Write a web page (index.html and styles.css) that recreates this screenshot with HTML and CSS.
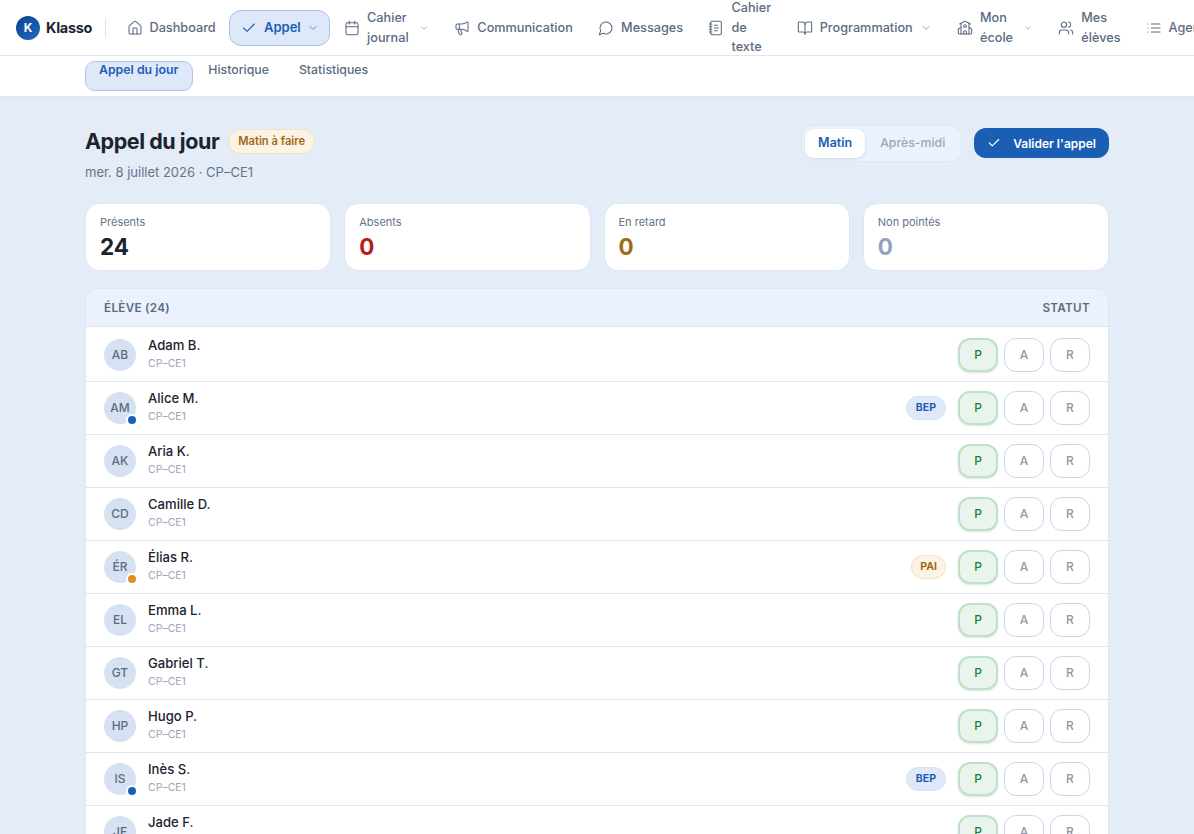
FILE: index.html
```html
<!DOCTYPE html>
<html lang="fr">
<head>
  <meta charset="UTF-8">
  <meta name="viewport" content="width=device-width, initial-scale=1">
  <title>Appel du jour</title>
  <link rel="stylesheet" href="styles.css">
</head>

<body>

<header class="topbar">
  <div class="brand">
    <span class="brand-mark">K</span>
    <span class="brand-name">Klasso</span>
  </div>
  <span class="topbar-sep"></span>
  <nav class="main-nav">
    <a class="nav-item">
      <svg class="nav-icon" viewBox="0 0 24 24"><path d="M15 21v-8a1 1 0 0 0-1-1h-4a1 1 0 0 0-1 1v8"/><path d="M3 10a2 2 0 0 1 .709-1.528l7-5.999a2 2 0 0 1 2.582 0l7 5.999A2 2 0 0 1 21 10v9a2 2 0 0 1-2 2H5a2 2 0 0 1-2-2z"/></svg>
      <span>Dashboard</span>
    </a>
    <a class="nav-item active">
      <svg class="nav-icon" viewBox="0 0 24 24"><path d="M20 6 9 17l-5-5"/></svg>
      <span>Appel</span>
      <svg class="nav-caret" viewBox="0 0 24 24"><path d="m6 9 6 6 6-6"/></svg>
    </a>
    <a class="nav-item">
      <svg class="nav-icon" viewBox="0 0 24 24"><path d="M8 2v4"/><path d="M16 2v4"/><rect x="3" y="4" width="18" height="18" rx="2"/><path d="M3 10h18"/></svg>
      <span class="nav-wrap w-journal">Cahier<br>journal</span>
      <svg class="nav-caret small" viewBox="0 0 24 24"><path d="m6 9 6 6 6-6"/></svg>
    </a>
    <a class="nav-item">
      <svg class="nav-icon" viewBox="0 0 24 24"><path d="M11 6a13 13 0 0 0 8.4-2.8A1 1 0 0 1 21 4v12a1 1 0 0 1-1.6.8A13 13 0 0 0 11 14H5a2 2 0 0 1-2-2V8a2 2 0 0 1 2-2z"/><path d="M6 14a12 12 0 0 0 2.4 7.2 2 2 0 0 0 3.2-2.4A8 8 0 0 1 10 14"/><path d="M8 6v8"/></svg>
      <span>Communication</span>
    </a>
    <a class="nav-item">
      <svg class="nav-icon" viewBox="0 0 24 24"><path d="M7.9 20A9 9 0 1 0 4 16.1L2 22Z"/></svg>
      <span>Messages</span>
    </a>
    <a class="nav-item">
      <svg class="nav-icon" viewBox="0 0 24 24"><path d="M2 6h4"/><path d="M2 10h4"/><path d="M2 14h4"/><path d="M2 18h4"/><rect x="4" y="2" width="16" height="20" rx="2"/><path d="M9.5 8h5"/><path d="M9.5 12H16"/><path d="M9.5 16H14"/></svg>
      <span class="nav-wrap w-texte">Cahier<br>de<br>texte</span>
    </a>
    <a class="nav-item">
      <svg class="nav-icon" viewBox="0 0 24 24"><path d="M12 7v14"/><path d="M3 18a1 1 0 0 1-1-1V4a1 1 0 0 1 1-1h5a4 4 0 0 1 4 4 4 4 0 0 1 4-4h5a1 1 0 0 1 1 1v13a1 1 0 0 1-1 1h-6a3 3 0 0 0-3 3 3 3 0 0 0-3-3z"/></svg>
      <span>Programmation</span>
      <svg class="nav-caret" viewBox="0 0 24 24"><path d="m6 9 6 6 6-6"/></svg>
    </a>
    <a class="nav-item">
      <svg class="nav-icon" viewBox="0 0 24 24"><path d="M14 21v-3a2 2 0 0 0-4 0v3"/><path d="M18 4.933V21"/><path d="m4 6 7.106-3.79a2 2 0 0 1 1.788 0L20 6"/><path d="m6 11-3.52 2.147a1 1 0 0 0-.48.854V19a2 2 0 0 0 2 2h16a2 2 0 0 0 2-2v-5a1 1 0 0 0-.48-.853L18 11"/><path d="M6 4.933V21"/><circle cx="12" cy="9" r="2"/></svg>
      <span class="nav-wrap w-ecole">Mon<br>école</span>
      <svg class="nav-caret small" viewBox="0 0 24 24"><path d="m6 9 6 6 6-6"/></svg>
    </a>
    <a class="nav-item">
      <svg class="nav-icon" viewBox="0 0 24 24"><path d="M16 21v-2a4 4 0 0 0-4-4H6a4 4 0 0 0-4 4v2"/><circle cx="9" cy="7" r="4"/><path d="M22 21v-2a4 4 0 0 0-3-3.87"/><path d="M16 3.13a4 4 0 0 1 0 7.75"/></svg>
      <span class="nav-wrap w-eleves">Mes<br>élèves</span>
    </a>
    <a class="nav-item">
      <svg class="nav-icon" viewBox="0 0 24 24"><path d="M3 12h.01"/><path d="M3 18h.01"/><path d="M3 6h.01"/><path d="M8 12h13"/><path d="M8 18h13"/><path d="M8 6h13"/></svg>
      <span>Agenda</span>
    </a>
  </nav>
</header>

<div class="subnav">
  <a class="sub-tab active">Appel du jour</a>
  <a class="sub-tab">Historique</a>
  <a class="sub-tab">Statistiques</a>
</div>

<main class="page">
  <div class="page-head">
    <div>
      <div class="title-row">
        <h1>Appel du jour</h1>
        <span class="state-badge">Matin à faire</span>
      </div>
      <p class="page-date">mer. 8 juillet 2026 · CP–CE1</p>
    </div>
    <div class="page-actions">
      <div class="segment">
        <span class="segment-opt active">Matin</span>
        <span class="segment-opt">Après-midi</span>
      </div>
      <button class="validate-btn">
        <svg viewBox="0 0 24 24"><path d="M20 6 9 17l-5-5"/></svg>
        Valider l'appel
      </button>
    </div>
  </div>

  <div class="stats">
    <div class="stat-card">
      <div class="stat-label">Présents</div>
      <div class="stat-value">24</div>
    </div>
    <div class="stat-card">
      <div class="stat-label">Absents</div>
      <div class="stat-value red">0</div>
    </div>
    <div class="stat-card">
      <div class="stat-label">En retard</div>
      <div class="stat-value amber">0</div>
    </div>
    <div class="stat-card">
      <div class="stat-label">Non pointés</div>
      <div class="stat-value grey">0</div>
    </div>
  </div>

  <section class="roster">
    <div class="roster-head">
      <span>Élève (24)</span>
      <span>Statut</span>
    </div>
    <div class="roster-list">
      <div class="student">
        <div class="avatar">AB</div>
        <div class="student-info"><div class="student-name">Adam B.</div><div class="student-class">CP–CE1</div></div>
        <div class="status"><span class="status-btn on">P</span><span class="status-btn">A</span><span class="status-btn">R</span></div>
      </div>
      <div class="student">
        <div class="avatar">AM<i class="dot blue"></i></div>
        <div class="student-info"><div class="student-name">Alice M.</div><div class="student-class">CP–CE1</div></div>
        <span class="tag bep">BEP</span>
        <div class="status"><span class="status-btn on">P</span><span class="status-btn">A</span><span class="status-btn">R</span></div>
      </div>
      <div class="student">
        <div class="avatar">AK</div>
        <div class="student-info"><div class="student-name">Aria K.</div><div class="student-class">CP–CE1</div></div>
        <div class="status"><span class="status-btn on">P</span><span class="status-btn">A</span><span class="status-btn">R</span></div>
      </div>
      <div class="student">
        <div class="avatar">CD</div>
        <div class="student-info"><div class="student-name">Camille D.</div><div class="student-class">CP–CE1</div></div>
        <div class="status"><span class="status-btn on">P</span><span class="status-btn">A</span><span class="status-btn">R</span></div>
      </div>
      <div class="student">
        <div class="avatar">ÉR<i class="dot orange"></i></div>
        <div class="student-info"><div class="student-name">Élias R.</div><div class="student-class">CP–CE1</div></div>
        <span class="tag pai">PAI</span>
        <div class="status"><span class="status-btn on">P</span><span class="status-btn">A</span><span class="status-btn">R</span></div>
      </div>
      <div class="student">
        <div class="avatar">EL</div>
        <div class="student-info"><div class="student-name">Emma L.</div><div class="student-class">CP–CE1</div></div>
        <div class="status"><span class="status-btn on">P</span><span class="status-btn">A</span><span class="status-btn">R</span></div>
      </div>
      <div class="student">
        <div class="avatar">GT</div>
        <div class="student-info"><div class="student-name">Gabriel T.</div><div class="student-class">CP–CE1</div></div>
        <div class="status"><span class="status-btn on">P</span><span class="status-btn">A</span><span class="status-btn">R</span></div>
      </div>
      <div class="student">
        <div class="avatar">HP</div>
        <div class="student-info"><div class="student-name">Hugo P.</div><div class="student-class">CP–CE1</div></div>
        <div class="status"><span class="status-btn on">P</span><span class="status-btn">A</span><span class="status-btn">R</span></div>
      </div>
      <div class="student">
        <div class="avatar">IS<i class="dot blue"></i></div>
        <div class="student-info"><div class="student-name">Inès S.</div><div class="student-class">CP–CE1</div></div>
        <span class="tag bep">BEP</span>
        <div class="status"><span class="status-btn on">P</span><span class="status-btn">A</span><span class="status-btn">R</span></div>
      </div>
      <div class="student">
        <div class="avatar">JF</div>
        <div class="student-info"><div class="student-name">Jade F.</div><div class="student-class">CP–CE1</div></div>
        <div class="status"><span class="status-btn on">P</span><span class="status-btn">A</span><span class="status-btn">R</span></div>
      </div>
    </div>
  </section>
</main>

</body>
</html>
```

FILE: styles.css
```css
* {
  box-sizing: border-box;
}
html, body {
  height: 100%;
  overflow: hidden;
}
body {
  margin: 0;
  font-family: Inter, "Liberation Sans", sans-serif;
  font-size: 13px;
  line-height: 1.5;
  color: #1c2330;
  background: #e4ecf7;
}

/* top bar */
.topbar {
  display: flex;
  align-items: center;
  height: 56px;
  padding-left: 16px;
  background: white;
  border-bottom: 1px solid #dfe6f0;
  overflow: hidden;
}
.brand {
  display: flex;
  align-items: center;
  gap: 6px;
  flex-shrink: 0;
}
.brand-mark {
  display: flex;
  align-items: center;
  justify-content: center;
  width: 24px;
  height: 24px;
  border-radius: 50%;
  background: linear-gradient(135deg, #0f3f86, #1f6cc6);
  color: white;
  font-size: 12px;
  font-weight: 700;
}
.brand-name {
  width: 47px;
  font-size: 14.5px;
  font-weight: 700;
  letter-spacing: -0.3px;
}
.topbar-sep {
  flex-shrink: 0;
  width: 1px;
  height: 20px;
  margin: 0 9px 0 12px;
  background: #dfe6f0;
}
.main-nav {
  display: flex;
  align-items: center;
  gap: 2.3px;
}
.nav-item {
  display: flex;
  align-items: center;
  flex-shrink: 0;
  gap: 7px;
  height: 36px;
  padding: 0 10.5px;
  border: 1.5px solid transparent;
  border-radius: 12px;
  color: #5b6b82;
  font-size: 12.7px;
  font-weight: 450;
  line-height: 19.5px;
  white-space: nowrap;
}
.nav-item.active {
  background: #dfe8f9;
  border-color: #a7c4ec;
  color: #1a5fb4;
  font-size: 13px;
  font-weight: 600;
}
.nav-icon {
  flex-shrink: 0;
  width: 16px;
  height: 16px;
  fill: none;
  stroke: currentColor;
  stroke-width: 1.6;
  stroke-linecap: round;
  stroke-linejoin: round;
}
.nav-caret {
  flex-shrink: 0;
  width: 12px;
  height: 12px;
  fill: none;
  stroke: #95a3b8;
  stroke-width: 2;
  stroke-linecap: round;
  stroke-linejoin: round;
}
.active .nav-caret {
  stroke: #5f8fd0;
  margin-left: -1px;
}
.nav-caret.small {
  width: 10px;
  height: 10px;
}
.w-journal { width: 45px; }
.w-texte { width: 40px; }
.w-ecole { width: 36px; }
.w-eleves { width: 39px; }

/* sub nav */
.subnav {
  display: flex;
  align-items: flex-start;
  gap: 2px;
  height: 41px;
  padding: 5px 0 0 85px;
  background: white;
  border-bottom: 1px solid #dfe6f0;
}
.sub-tab {
  height: 30px;
  padding: 0 13px;
  border: 1.5px solid transparent;
  border-radius: 10px;
  color: #5b6b82;
  font-size: 12.3px;
  font-weight: 450;
  line-height: 15px;
}
.sub-tab.active {
  margin-right: -1px;
  padding-right: 14px;
  background: #dfe8f9;
  border-color: #a7c4ec;
  color: #1a5fb4;
  font-weight: 600;
}

/* page */
.page {
  width: 1024px;
  margin: 0 auto;
  padding-top: 28px;
}
.page-head {
  display: flex;
  align-items: flex-start;
  justify-content: space-between;
  margin-bottom: 20.5px;
}
.title-row {
  display: flex;
  align-items: center;
  gap: 9px;
}
h1 {
  margin: 0;
  font-size: 21.5px;
  font-weight: 700;
  line-height: 33px;
  letter-spacing: -0.45px;
}
.state-badge {
  padding: 0 9px;
  height: 25px;
  line-height: 23px;
  border: 1px solid #f5e0bd;
  border-radius: 13px;
  background: #fdf3e5;
  color: #a06a14;
  font-size: 11.2px;
  font-weight: 600;
}
.page-date {
  margin: 5px 0 0;
  color: #64748b;
}
.page-actions {
  display: flex;
  align-items: flex-start;
  gap: 12px;
  height: 37px;
}
.segment {
  display: flex;
  gap: 2px;
  height: 37px;
  padding: 3px;
  background: #ebf2fd;
  border: 1px solid #dde6f3;
  border-radius: 12px;
}
.segment-opt {
  display: flex;
  align-items: center;
  padding: 0 13px;
  border-radius: 9px;
  color: #9aa8bc;
  font-size: 12.3px;
  font-weight: 500;
}
.segment-opt.active {
  background: white;
  color: #1a5fb4;
  font-size: 12.5px;
  font-weight: 600;
  box-shadow: 0 1px 3px rgba(30,60,110,0.15);
}
.validate-btn {
  display: flex;
  align-items: center;
  gap: 12px;
  height: 30px;
  margin-top: 3px;
  padding: 0 13px;
  border: none;
  border-radius: 12px;
  background: #1a5fb4;
  color: white;
  font-family: inherit;
  font-size: 12px;
  font-weight: 600;
}
.validate-btn svg {
  width: 14px;
  height: 14px;
  fill: none;
  stroke: white;
  stroke-width: 2;
  stroke-linecap: round;
  stroke-linejoin: round;
}

/* stat cards */
.stats {
  display: grid;
  grid-template-columns: repeat(4, 1fr);
  gap: 13px;
  margin-bottom: 17px;
}
.stat-card {
  height: 68px;
  padding: 10px 14px 8px;
  background: white;
  border: 1px solid #dde6f3;
  border-radius: 14px;
}
.stat-label {
  color: #64748b;
  font-size: 11px;
  line-height: 16.5px;
}
.stat-value {
  font-size: 22.5px;
  font-weight: 700;
  line-height: 32px;
}
.stat-value.red { color: #b91c1c; }
.stat-value.amber { color: #a06a14; }
.stat-value.grey { color: #94a3b8; }

/* student list */
.roster {
  background: white;
  border: 1px solid #dde6f3;
  border-radius: 14px 14px 0 0;
  overflow: hidden;
}
.roster-head {
  display: flex;
  justify-content: space-between;
  align-items: center;
  height: 38px;
  padding: 2px 18px 0;
  background: #ebf2fd;
  border-bottom: 1px solid #dde6f3;
  color: #5b6b82;
  font-size: 11.7px;
  font-weight: 600;
  letter-spacing: 0.3px;
  text-transform: uppercase;
}
.roster-list {
  padding-top: 2px;
}
.student {
  display: flex;
  align-items: center;
  height: 53px;
  padding: 0 18px;
  border-bottom: 1px solid #dfe6f0;
}
.avatar {
  position: relative;
  display: flex;
  align-items: center;
  justify-content: center;
  flex-shrink: 0;
  width: 32px;
  height: 32px;
  margin-right: 12px;
  border-radius: 50%;
  background: #d6e1f1;
  color: #5b6b82;
  font-size: 12px;
  font-weight: 550;
}
.dot {
  position: absolute;
  right: -2px;
  bottom: -2px;
  width: 12px;
  height: 12px;
  border: 2px solid white;
  border-radius: 50%;
}
.dot.blue { background: #1a5fb4; }
.dot.orange { background: #dc8f22; }
.student-info {
  flex: 1;
  margin-top: -1px;
}
.student-name {
  font-size: 13.1px;
  font-weight: 450;
  line-height: 18px;
}
.student-class {
  margin-top: 1px;
  color: #98a6ba;
  font-size: 10.5px;
  line-height: 18px;
}
.tag {
  height: 24px;
  margin-right: 12px;
  padding: 0 9px;
  border: 1px solid;
  border-radius: 12px;
  font-size: 10.5px;
  font-weight: 650;
  line-height: 22px;
}
.tag.bep {
  background: #dfe8f9;
  border-color: #d5e1f4;
  color: #1a5fb4;
}
.tag.pai {
  padding: 0 8px;
  background: #fdf3e5;
  border-color: #f5e0bd;
  color: #a06a14;
}
.status {
  display: flex;
  gap: 6px;
}
.status-btn {
  display: flex;
  align-items: center;
  justify-content: center;
  width: 40px;
  height: 34px;
  background: white;
  border: 1px solid #c9d6e8;
  border-radius: 12px;
  color: #8b98ae;
  font-size: 12px;
  font-weight: 450;
}
.status-btn.on {
  background: #e9f4ec;
  border: 2px solid #bfe0c9;
  color: #1f7a45;
  box-shadow: 0 1px 2px rgba(30,90,60,0.15);
}
```
